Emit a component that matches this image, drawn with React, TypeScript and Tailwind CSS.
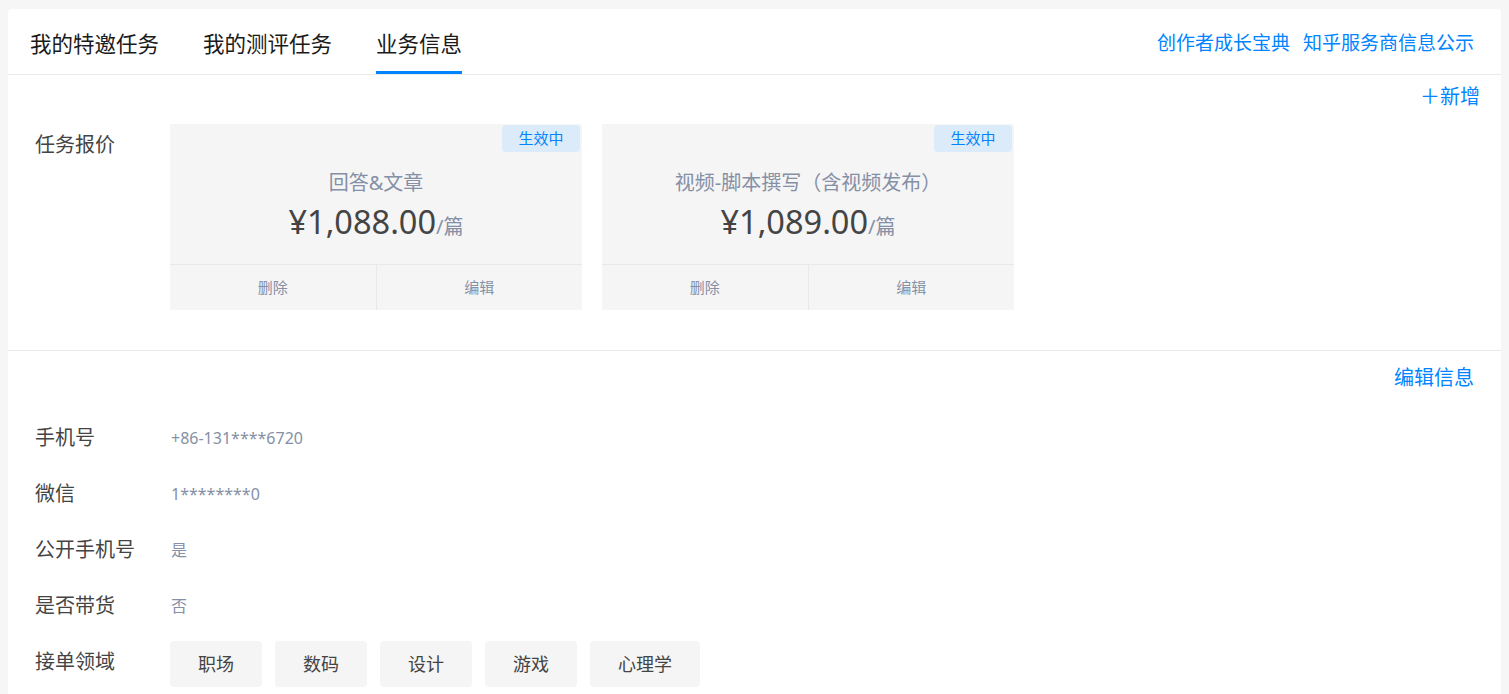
import React from "react";

const font = {
  fontFamily: '"Noto Sans", "Noto Sans CJK SC", sans-serif',
};

type Quote = {
  title: string;
  price: string;
  unit: string;
};

const quotes: Quote[] = [
  { title: "回答&文章", price: "¥1,088.00", unit: "/篇" },
  { title: "视频-脚本撰写（含视频发布）", price: "¥1,089.00", unit: "/篇" },
];

const infoRows = [
  { label: "手机号", value: "+86-131****6720" },
  { label: "微信", value: "1********0" },
  { label: "公开手机号", value: "是" },
  { label: "是否带货", value: "否" },
];

const fields = ["职场", "数码", "设计", "游戏", "心理学"];

const tabs = [
  { label: "我的特邀任务", active: false },
  { label: "我的测评任务", active: false },
  { label: "业务信息", active: true },
];

const QuoteCard = ({ quote }: { quote: Quote }) => (
  <div className="relative flex h-[186px] w-[412px] flex-col bg-[#f5f5f5]">
    <span className="absolute right-0.5 top-px flex h-[27px] w-[78px] items-center justify-center rounded-sm bg-[#dcebfa] text-[15px] text-[#0084ff]">
      生效中
    </span>
    <div className="flex h-[140px] flex-col items-center pt-[45px]">
      <div className="text-[20px] leading-[28px] text-[#8590a6]">
        {quote.title}
      </div>
      <div className="mt-[5px] flex items-baseline leading-[40px]">
        <span className="text-[32.5px] text-[#444444]">{quote.price}</span>
        <span className="text-[20px] text-[#8590a6]">{quote.unit}</span>
      </div>
    </div>
    <div className="flex h-[46px] border-t border-[#e9e9e9] text-[15px] text-[#8590a6]">
      <button className="flex flex-1 items-center justify-center">删除</button>
      <button className="flex flex-1 items-center justify-center border-l border-[#e9e9e9]">
        编辑
      </button>
    </div>
  </div>
);

export default function App() {
  return (
    <div className="min-h-screen bg-[#f6f6f6] px-2 pt-[9px]" style={font}>
      <div className="rounded-t-sm bg-white">
        {/* header tabs */}
        <div className="flex h-[66px] items-stretch justify-between border-b border-[#ebebeb] pl-[22px] pr-[27px]">
          <div className="flex items-stretch gap-[44px]">
            {tabs.map((tab) => (
              <div
                key={tab.label}
                className={
                  tab.active
                    ? "flex items-center border-b-[3px] border-[#0084ff] pt-2 text-[21.5px] text-[#1a1a1a]"
                    : "flex items-center border-b-[3px] border-transparent pt-2 text-[21.5px] text-[#1a1a1a]"
                }
              >
                {tab.label}
              </div>
            ))}
          </div>
          <div className="flex items-center gap-[13px] pt-1 text-[19px] text-[#0084ff]">
            <a>创作者成长宝典</a>
            <a>知乎服务商信息公示</a>
          </div>
        </div>

        {/* quotes */}
        <div className="border-b border-[#ebebeb] pb-10 pt-[10px]">
          <div className="flex justify-end pr-[21px] text-[20px] leading-[24px] text-[#0084ff]">
            <span>＋新增</span>
          </div>
          <div className="mt-[15px] flex">
            <div className="w-[162px] pl-[27px] pt-[9px] text-[20px] leading-[24px] text-[#444444]">
              任务报价
            </div>
            <div className="flex gap-5">
              {quotes.map((q) => (
                <QuoteCard key={q.title} quote={q} />
              ))}
            </div>
          </div>
        </div>

        {/* info */}
        <div className="pb-6 pt-[14px]">
          <div className="flex justify-end pr-[27px] text-[20px] leading-[26px] text-[#0084ff]">
            <span>编辑信息</span>
          </div>
          <div className="mt-[19px] flex flex-col">
            {infoRows.map((row) => (
              <div key={row.label} className="flex h-[56px] items-center">
                <div className="w-[162px] pl-[27px] text-[20px] text-[#444444]">
                  {row.label}
                </div>
                <div className="pl-px text-[16px] text-[#8590a6]">
                  {row.value}
                </div>
              </div>
            ))}
            <div className="flex h-[56px] items-center">
              <div className="w-[162px] self-start pl-[27px] pt-[13px] text-[20px] text-[#444444]">
                接单领域
              </div>
              <div className="flex gap-[13px] pt-1">
                {fields.map((f) => (
                  <span
                    key={f}
                    className="flex h-[46px] items-center rounded-sm bg-[#f5f5f5] px-7 text-[18px] text-[#444444]"
                  >
                    {f}
                  </span>
                ))}
              </div>
            </div>
          </div>
        </div>
      </div>
    </div>
  );
}
